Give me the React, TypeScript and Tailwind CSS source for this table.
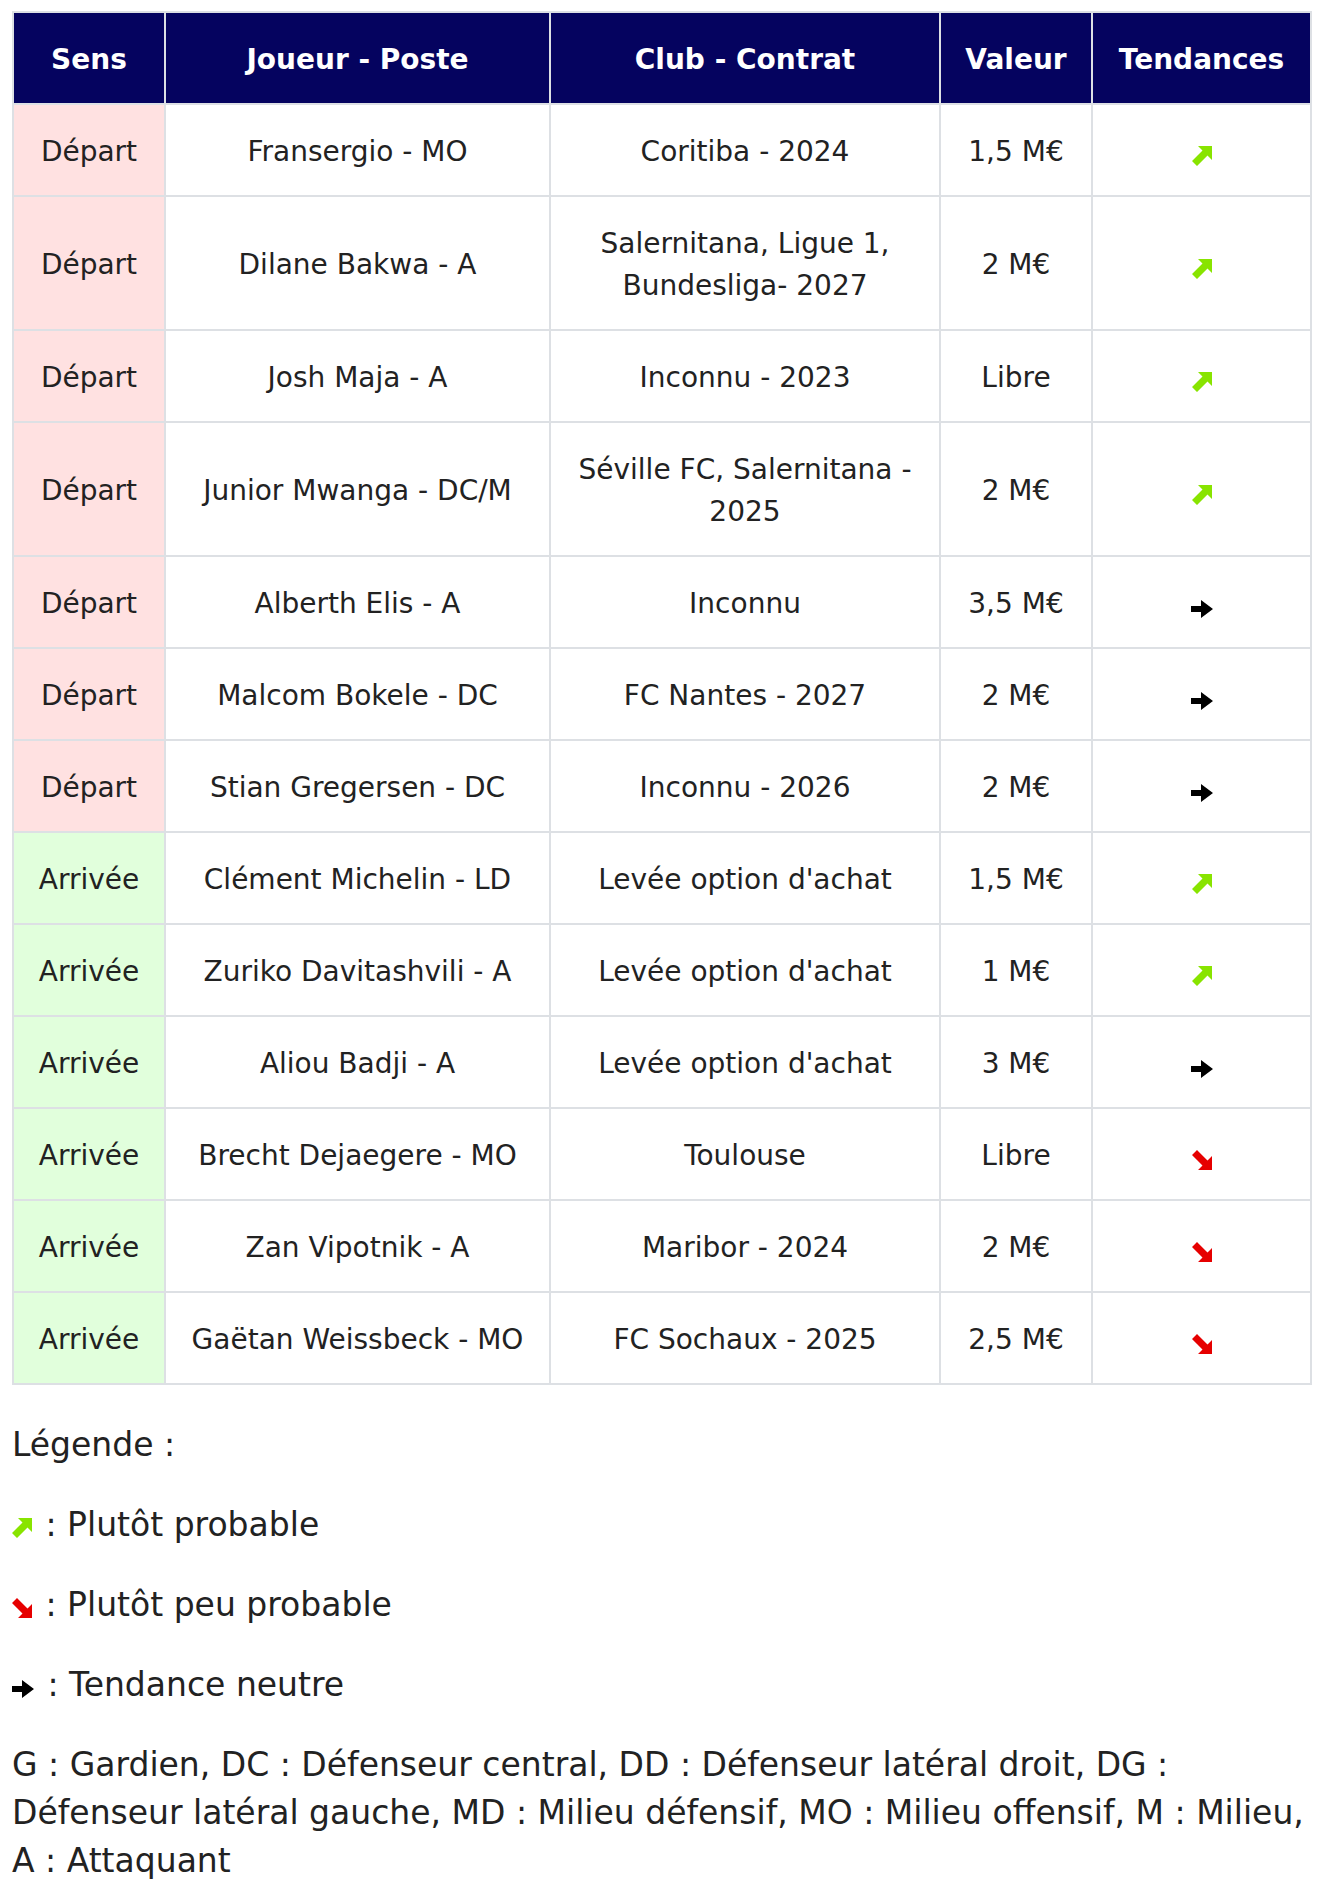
type Trend = "up" | "down" | "flat"

type Row = {
    sens: "Départ" | "Arrivée"
    joueur: string
    club: string[]
    valeur: string
    trend: Trend
}

const rows: Row[] = [
    { sens: "Départ", joueur: "Fransergio - MO", club: ["Coritiba - 2024"], valeur: "1,5 M€", trend: "up" },
    { sens: "Départ", joueur: "Dilane Bakwa - A", club: ["Salernitana, Ligue 1,", "Bundesliga- 2027"], valeur: "2 M€", trend: "up" },
    { sens: "Départ", joueur: "Josh Maja - A", club: ["Inconnu - 2023"], valeur: "Libre", trend: "up" },
    { sens: "Départ", joueur: "Junior Mwanga - DC/M", club: ["Séville FC, Salernitana -", "2025"], valeur: "2 M€", trend: "up" },
    { sens: "Départ", joueur: "Alberth Elis - A", club: ["Inconnu"], valeur: "3,5 M€", trend: "flat" },
    { sens: "Départ", joueur: "Malcom Bokele - DC", club: ["FC Nantes - 2027"], valeur: "2 M€", trend: "flat" },
    { sens: "Départ", joueur: "Stian Gregersen - DC", club: ["Inconnu - 2026"], valeur: "2 M€", trend: "flat" },
    { sens: "Arrivée", joueur: "Clément Michelin - LD", club: ["Levée option d'achat"], valeur: "1,5 M€", trend: "up" },
    { sens: "Arrivée", joueur: "Zuriko Davitashvili - A", club: ["Levée option d'achat"], valeur: "1 M€", trend: "up" },
    { sens: "Arrivée", joueur: "Aliou Badji - A", club: ["Levée option d'achat"], valeur: "3 M€", trend: "flat" },
    { sens: "Arrivée", joueur: "Brecht Dejaegere - MO", club: ["Toulouse"], valeur: "Libre", trend: "down" },
    { sens: "Arrivée", joueur: "Zan Vipotnik - A", club: ["Maribor - 2024"], valeur: "2 M€", trend: "down" },
    { sens: "Arrivée", joueur: "Gaëtan Weissbeck - MO", club: ["FC Sochaux - 2025"], valeur: "2,5 M€", trend: "down" },
]

// small trend arrows, like the gif icons of the original page
const Arrow = ({ trend, className = "" }: { trend: Trend; className?: string }) => {
    if (trend === "up") {
        return (
            <svg width="20" height="20" viewBox="0 0 20 20" className={`inline-block ${className}`}>
                <polygon points="6,0 20,0 20,14 15.5,9.5 5,20 0,15 10.5,4.5" fill="#88e400" />
            </svg>
        )
    }
    if (trend === "down") {
        return (
            <svg width="20" height="20" viewBox="0 0 20 20" className={`inline-block ${className}`}>
                <polygon points="6,20 20,20 20,6 15.5,10.5 5,0 0,5 10.5,15.5" fill="#e60000" />
            </svg>
        )
    }
    return (
        <svg width="22" height="18" viewBox="0 0 22 18" className={`inline-block ${className}`}>
            <polygon points="0,6 10,6 10,0 22,9 10,18 10,12 0,12" fill="#000" />
        </svg>
    )
}

const sensColor = {
    "Départ": "bg-[#ffe1e1]",
    "Arrivée": "bg-[#e1ffdc]",
}

const td = "border-2 border-[#dde0e4] text-center px-2 pt-[26px] pb-[22px] leading-[42px]"

const App = () => {
    return (
        <div className="bg-white text-[#222] px-3 pt-[11px] pb-6 font-['DejaVu_Sans',sans-serif]">
            <table className="w-full border-collapse table-fixed text-[28px]">
                <colgroup>
                    <col className="w-[152px]" />
                    <col className="w-[385px]" />
                    <col className="w-[390px]" />
                    <col className="w-[152px]" />
                    <col className="w-[219px]" />
                </colgroup>
                <thead>
                    <tr className="bg-[#05035f] text-white">
                        <th className={`${td} font-bold`}>Sens</th>
                        <th className={`${td} font-bold`}>Joueur - Poste</th>
                        <th className={`${td} font-bold`}>Club - Contrat</th>
                        <th className={`${td} font-bold`}>Valeur</th>
                        <th className={`${td} font-bold`}>Tendances</th>
                    </tr>
                </thead>
                <tbody>
                    {rows.map((r, i) => (
                        <tr key={i}>
                            <td className={`${td} ${sensColor[r.sens]}`}>{r.sens}</td>
                            <td className={td}>{r.joueur}</td>
                            <td className={td}>
                                {r.club.map((line, j) => (
                                    <div key={j}>{line}</div>
                                ))}
                            </td>
                            <td className={td}>{r.valeur}</td>
                            <td className={td}>
                                <Arrow trend={r.trend} className="align-[-5px]" />
                            </td>
                        </tr>
                    ))}
                </tbody>
            </table>

            <div className="text-[33px] leading-[48px]">
                <p className="mt-[36px]">Légende&nbsp;:</p>
                <p className="mt-[32px]"><Arrow trend="up" className="align-[-2px] mr-[3px]" /> : Plutôt probable</p>
                <p className="mt-[32px]"><Arrow trend="down" className="align-[-2px] mr-[3px]" /> : Plutôt peu probable</p>
                <p className="mt-[32px]"><Arrow trend="flat" className="align-[-2px] mr-[3px]" /> : Tendance neutre</p>
                <p className="mt-[32px]">
                    G&nbsp;: Gardien, DC&nbsp;: Défenseur central, DD&nbsp;: Défenseur latéral droit, DG&nbsp;: Défenseur latéral gauche, MD&nbsp;: Milieu défensif, MO&nbsp;: Milieu offensif, M&nbsp;: Milieu, A&nbsp;: Attaquant
                </p>
            </div>
        </div>
    )
}

export default App
